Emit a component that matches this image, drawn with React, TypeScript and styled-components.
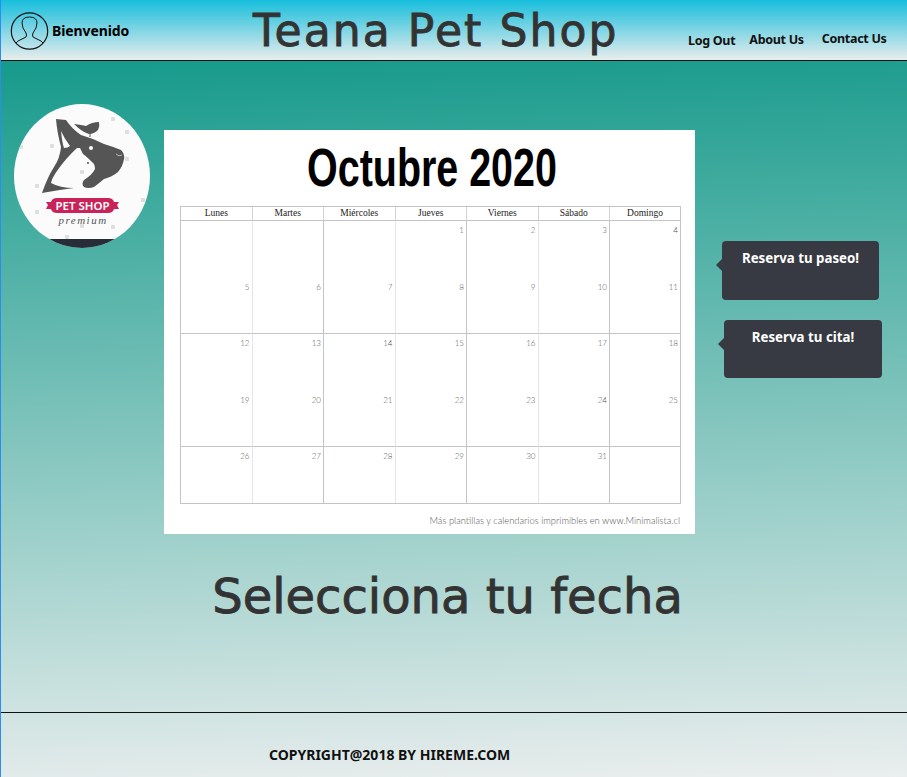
import React from "react";
import styled, { createGlobalStyle } from "styled-components";

const GlobalStyle = createGlobalStyle`
  html, body {
    margin: 0;
    padding: 0;
    background: #fff;
  }
  * {
    box-sizing: border-box;
  }
`;

const Page = styled.div`
  width: 907px;
  height: 777px;
  overflow: hidden;
  display: flex;
  flex-direction: column;
  border-left: 1px solid #2a8cf5;
  font-family: "Noto Sans", sans-serif;
`;

const Header = styled.header`
  height: 61px;
  flex: none;
  display: flex;
  align-items: flex-start;
  background: linear-gradient(to bottom, #17bedc 0%, #e9eded 100%);
  border-bottom: 1px solid #111;
`;

const Avatar = styled.svg`
  width: 40px;
  height: 38px;
  margin: 12px 0 0 9px;
  flex: none;
`;

const Welcome = styled.span`
  margin: 21px 0 0 2px;
  width: 88px;
  font-size: 14px;
  line-height: 20px;
  font-weight: 700;
  color: #000;
  letter-spacing: -0.1px;
`;

const Brand = styled.h1`
  margin: 6px 0 0 113px;
  width: 380px;
  font-family: "DejaVu Sans", sans-serif;
  font-size: 44px;
  line-height: 50px;
  font-weight: 400;
  color: #333;
  white-space: nowrap;
  letter-spacing: 2.1px;
  -webkit-text-stroke: 0.9px #333;
`;

const Nav = styled.nav`
  display: flex;
  align-items: flex-start;
  margin-left: 55px;
`;

const NavLink = styled.a<{ $top: number; $gap: number }>`
  margin-top: ${(p) => p.$top}px;
  margin-left: ${(p) => p.$gap}px;
  font-size: 12.5px;
  line-height: 18px;
  font-weight: 700;
  letter-spacing: -0.3px;
  color: #111;
  white-space: nowrap;
`;

const Body = styled.div`
  flex: 1;
  display: flex;
  flex-direction: column;
  background: linear-gradient(178deg, #169a8b 0%, #eaeeee 100%);
`;

const Main = styled.main`
  height: 652px;
  flex: none;
  border-bottom: 1px solid #111;
  display: flex;
  flex-direction: column;
`;

const Row = styled.div`
  display: flex;
  align-items: flex-start;
`;

const Logo = styled.svg`
  width: 136px;
  height: 144px;
  margin: 43px 0 0 13px;
  flex: none;
`;

const Sheet = styled.section`
  width: 531px;
  height: 404px;
  margin: 69px 0 0 14px;
  flex: none;
  background: #fff;
  display: flex;
  flex-direction: column;
`;

const Month = styled.h2`
  margin: 4px 0 0 5px;
  height: 72px;
  font-family: "Liberation Sans", sans-serif;
  font-size: 54px;
  line-height: 66px;
  font-weight: 700;
  color: #000;
  text-align: center;
  transform: scaleX(0.73);
  white-space: nowrap;
`;

const Calendar = styled.div`
  width: 501px;
  margin-left: 16px;
  display: grid;
  grid-template-columns: repeat(6, 71.5px) 70px;
  grid-template-rows: 14px repeat(4, 56.5px) 56px;
  border: 1px solid #c4c4c4;
`;

const DayName = styled.div<{ $last: boolean }>`
  font-family: "Liberation Serif", serif;
  font-size: 9.5px;
  line-height: 13px;
  text-align: center;
  color: #222;
  border-bottom: 1px solid #c4c4c4;
  border-right: ${(p) => (p.$last ? "none" : "1px solid #d4d4d4")};
`;

const Cell = styled.div<{ $strong: boolean; $last: boolean; $rule: boolean }>`
  font-family: Lato, sans-serif;
  font-size: 8px;
  line-height: 12px;
  font-weight: 300;
  text-align: right;
  color: #555;
  padding: 3px 2px 0 0;
  border-right: ${(p) =>
    p.$last ? "none" : p.$strong ? "1px solid #c4c4c4" : "1px solid #e6e6e6"};
  border-bottom: ${(p) => (p.$rule ? "1px solid #c4c4c4" : "none")};
`;

const Credit = styled.p`
  margin: 10px 15px 0 0;
  font-family: Lato, sans-serif;
  font-size: 9.4px;
  line-height: 14px;
  font-weight: 300;
  text-align: right;
  color: #555;
`;

const Actions = styled.div`
  margin: 180px 0 0 27px;
  display: flex;
  flex-direction: column;
  gap: 20px;
`;

const Bubble = styled.button<{ $width: number; $height: number; $shift: number }>`
  position: relative;
  width: ${(p) => p.$width}px;
  height: ${(p) => p.$height}px;
  margin-left: ${(p) => p.$shift}px;
  padding: 0 0 ${(p) => p.$height - 34}px;
  display: block;
  border: none;
  border-radius: 4px;
  background: #373a42;
  color: #fff;
  font-family: "Noto Sans", sans-serif;
  font-size: 13.3px;
  line-height: 20px;
  font-weight: 700;
  text-align: center;
  &::before {
    content: "";
    position: absolute;
    left: -6px;
    top: 18px;
    border-style: solid;
    border-width: 6px 6px 6px 0;
    border-color: transparent #373a42 transparent transparent;
  }
`;

const Prompt = styled.h2`
  margin: 32px 0 0 -13px;
  font-family: "DejaVu Sans", sans-serif;
  font-size: 48px;
  line-height: 60px;
  font-weight: 400;
  color: #333;
  text-align: center;
  white-space: nowrap;
  -webkit-text-stroke: 0.9px #333;
`;

const Footer = styled.footer`
  flex: 1;
  padding: 32px 0 0 268px;
  font-size: 14px;
  line-height: 20px;
  font-weight: 700;
  color: #111;
`;

const days = ["Lunes", "Martes", "Miércoles", "Jueves", "Viernes", "Sábado", "Domingo"];

// 35 casillas, el mes empieza en jueves
const cells: string[] = [
  "", "", "", "1", "2", "3", "4",
  ...Array.from({ length: 28 }, (_, i) => (i + 5 <= 31 ? String(i + 5) : "")),
];

const dots = [
  [99, 15], [113, 28], [38, 42], [7, 43], [113, 55], [23, 82],
  [68, 68], [129, 96], [23, 108], [68, 122], [99, 123], [53, 133],
];

const UserIcon = () => (
  <Avatar viewBox="0 0 40 38" fill="none" stroke="#111" strokeWidth="1">
    <circle cx="19.5" cy="19" r="18.2" strokeWidth="1.2" />
    <path d="M6 31 L8 29 Q12 27 16 25 Q17 23 16 21 Q12 16 12 11 Q12 5 19.500 5 Q27 5 27 11 Q27 16 23 21 Q22 23 23 25 Q27 27 31 29 L33 31" />
  </Avatar>
);

const LogoArt = () => (
  <Logo viewBox="0 0 136 144">
    <defs>
      <clipPath id="logoClip">
        <ellipse cx="68" cy="72" rx="68" ry="72" />
      </clipPath>
    </defs>
    <g clipPath="url(#logoClip)">
      <rect width="136" height="144" fill="#fbfbfb" />
      <rect y="135" width="136" height="9" fill="#262c38" />
      <g fill="#dedede">
        {dots.map(([x, y]) => (
          <rect key={`${x}-${y}`} x={x - 2} y={y - 2} width="4" height="4" rx="1" />
        ))}
      </g>
      <path
        fill="#555"
        d="M42 15 L52 16 Q58 25 67 31 Q78 34 90 40 Q100 43 107 46 Q111 50 110 55 Q109 62 104 68 Q98 73 90 75 Q84 80 80 83 Q74 85 70 83 Q67 80 70 76 Q78 71 81 65 Q81 60 78 58 Q72 52 69 50 L66 44 L63 44 Q52 54 43 67 Q38 74 37 79 Q46 84 60 84 Q44 86 28 89 Q34 72 40 63 Q46 54 47 43 Q43 28 42 15 Z"
      />
      <path fill="#fbfbfb" d="M47 27 Q48 38 50 44 Q54 44 56 42 Q50 34 47 27 Z" />
      <path
        fill="#555"
        d="M60 20 Q68 21 72 22 Q78 18 85 18 Q86 22 84 26 Q80 30 75 30 Q68 28 60 20 Z"
      />
      <path d="M76 29 L76 33" stroke="#555" strokeWidth="1" />
      <circle cx="77" cy="44" r="2" fill="#fbfbfb" />
      <circle cx="74" cy="59" r="1" fill="#555" />
      <path d="M102 50 Q105 53 108 51" fill="none" stroke="#fbfbfb" strokeWidth="0.6" />
      <path
        fill="#c9245a"
        d="M32 98 L37 98 Q38 94 43 94 L94 94 Q99 94 100 98 L105 98 L103 101 L105 105 L100 105 Q99 109 94 109 L43 109 Q38 109 37 105 L32 105 L34 101 Z"
      />
      <text
        x="68.500"
        y="105.500"
        textAnchor="middle"
        fontFamily="'Noto Sans', sans-serif"
        fontSize="11.500"
        fontWeight="600"
        fill="#fff"
      >
        PET SHOP
      </text>
      <text
        x="69"
        y="120"
        textAnchor="middle"
        fontFamily="'Liberation Serif', serif"
        fontSize="11"
        fontStyle="italic"
        letterSpacing="1.500"
        fill="#555"
      >
        premium
      </text>
    </g>
  </Logo>
);

const App: React.FC = () => {
  return (
    <Page>
      <GlobalStyle />
      <Header>
        <UserIcon />
        <Welcome>Bienvenido</Welcome>
        <Brand>Teana Pet Shop</Brand>
        <Nav>
          <NavLink $top={32} $gap={0}>Log Out</NavLink>
          <NavLink $top={31} $gap={14}>About Us</NavLink>
          <NavLink $top={30} $gap={18}>Contact Us</NavLink>
        </Nav>
      </Header>
      <Body>
        <Main>
          <Row>
            <LogoArt />
            <Sheet>
              <Month>Octubre 2020</Month>
              <Calendar>
                {days.map((d, i) => (
                  <DayName key={d} $last={i === 6}>{d}</DayName>
                ))}
                {cells.map((c, i) => {
                  const col = i % 7;
                  const row = Math.floor(i / 7);
                  return (
                    <Cell
                      key={i}
                      $strong={col % 2 === 1}
                      $last={col === 6}
                      $rule={row === 1 || row === 3}
                    >
                      {c}
                    </Cell>
                  );
                })}
              </Calendar>
              <Credit>Más plantillas y calendarios imprimibles en www.Minimalista.cl</Credit>
            </Sheet>
            <Actions>
              <Bubble $width={157} $height={59} $shift={0}>Reserva tu paseo!</Bubble>
              <Bubble $width={158} $height={58} $shift={2}>Reserva tu cita!</Bubble>
            </Actions>
          </Row>
          <Prompt>Selecciona tu fecha</Prompt>
        </Main>
        <Footer>COPYRIGHT@2018 BY HIREME.COM</Footer>
      </Body>
    </Page>
  );
};

export default App;
